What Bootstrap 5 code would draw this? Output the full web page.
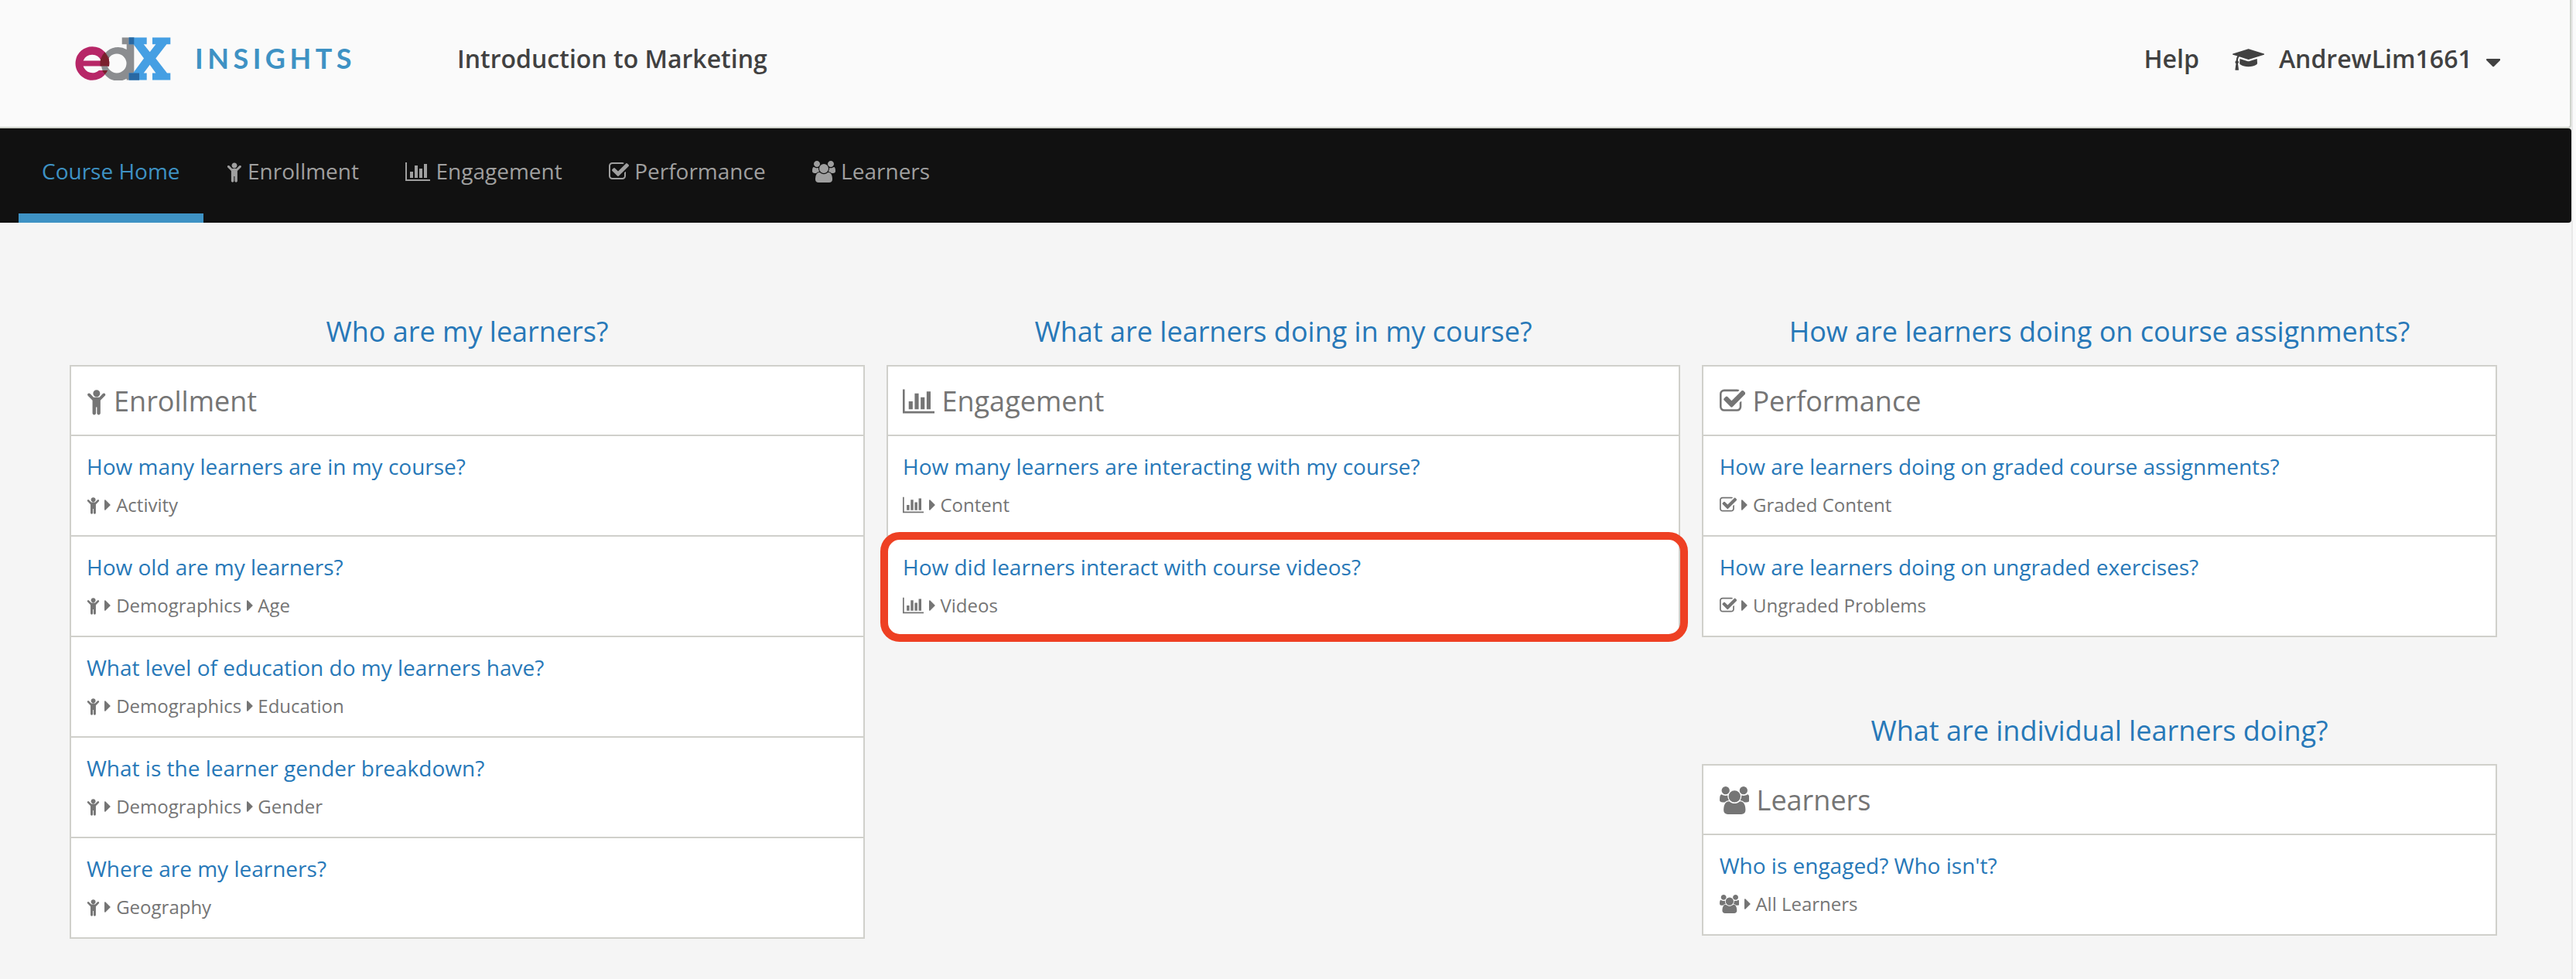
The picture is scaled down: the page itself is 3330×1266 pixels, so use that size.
<!DOCTYPE html>
<html lang="en">
<head>
<meta charset="utf-8">
<meta name="viewport" content="width=device-width, initial-scale=1">
<title>edX Insights - Introduction to Marketing</title>
<link href="https://cdn.jsdelivr.net/npm/bootstrap@5.3.0/dist/css/bootstrap.min.css" rel="stylesheet">
<style>
body{font-family:"Open Sans","Noto Sans",sans-serif;background:#f5f5f5;color:#757575;overflow:hidden}
.page-wrap{min-height:1266px}
.page-shell{width:3324px}
.page-gutter{width:6px;background:#fafafa;border-left:2px solid #e8e8e8}
.top-bar{height:166px;background:#fafafa;border-bottom:2px solid #d0d3cc;border-right:2px solid #d0d3cc;border-radius:0 0 4px 0;padding:0 90px 0 97px;color:#414141;font-size:32px;font-weight:600;line-height:44px}
.top-inner{height:152px}
.brand-word{font-family:Lato,sans-serif;font-weight:700;font-size:36px;letter-spacing:5.5px;color:#3e92c4;line-height:44px;margin-left:31px;padding-bottom:3px}
.course-title{margin-left:131px}
.user-cap{margin-left:43px}
.user-name{margin-left:19px}
.user-caret{margin-left:18px}
.ico{height:1em;vertical-align:-.143em;fill:currentColor}
.main-nav{height:122px;background:#111;border-radius:0 4px 4px 0;padding-left:24px}
.main-nav .nav-link{height:122px;padding:35px 30px 0;font-size:28px;line-height:40px;color:#9f9f9f;white-space:nowrap;border-radius:0}
.main-nav .nav-link + .nav-link{margin-left:.2px}
.main-nav .nav-link.active{color:#3e92c4;border-bottom:12px solid #3e92c4;background:none}
.board{display:grid;grid-template-columns:1028px 1026px 1028px;column-gap:28px;align-items:start;padding:116px 96px 0 90px}
.group-title{font-size:36px;line-height:50px;color:#2778b8;margin:0 0 18px;height:50px;text-align:center;font-weight:400}
.q-panel{border:2px solid #d0d0cb;border-radius:0;background:#fff}
.q-panel .list-group-item{border:0;border-top:2px solid #d0d0cb;padding:0 20px;height:130px;color:#757575;background:#fff}
.board > :nth-child(2) .list-group-item{padding-left:19px}
.board > :nth-child(3) .list-group-item{padding-left:20.7px}
.q-panel .q-head{border-top:0;height:88px;font-size:36px;line-height:90px;font-weight:400}
.q-link{display:block;font-size:28px;line-height:40px;padding-top:19px;color:#2778b8;text-decoration:none;white-space:nowrap}
.q-path{font-size:24px;line-height:34px;margin-top:13px;white-space:nowrap}
.second-group{margin-top:96px}
.callout{position:absolute;left:-10px;right:-12px;top:-6px;height:142px;border:10px solid #ee4023;border-radius:25px;z-index:3;pointer-events:none}
</style>
<script src="https://cdn.jsdelivr.net/npm/bootstrap@5.3.0/dist/js/bootstrap.bundle.min.js"></script>
</head>
<body>
<svg class="d-none" xmlns="http://www.w3.org/2000/svg">
<symbol id="child" viewBox="256 0 1280 1792"><path d="M1436 540l-292 292v824q0 46-33 79t-79 33-79-33-33-79v-384h-64v384q0 46-33 79t-79 33-79-33-33-79v-824l-292-292q-28-28-28-68t28-68q29-28 68.5-28t67.5 28l228 228h368l228-228q28-28 68-28t68 28q28 29 28 68.5t-28 67.5zm-316-156q0 93-65.500 158.500t-158.500 65.500-158.500-65.500-65.500-158.500 65.500-158.500 158.500-65.500 158.500 65.500 65.500 158.500z"/></symbol>
<symbol id="bars" viewBox="0 0 2048 1792"><path d="M640 896v512h-256v-512h256zm384-512v1024h-256v-1024h256zm1024 1152v128h-2048v-1536h128v1408h1920zm-640-896v768h-256v-768h256zm384-384v1152h-256v-1152h256z"/></symbol>
<symbol id="check" viewBox="64 0 1664 1792"><path d="M1472 930v318q0 119-84.500 203.500t-203.500 84.500h-832q-119 0-203.500-84.500t-84.500-203.500v-832q0-119 84.500-203.500t203.500-84.500h832q63 0 117 25 15 7 18 23 3 17-9 29l-49 49q-10 10-23 10-3 0-9-2-23-6-45-6h-832q-66 0-113 47t-47 113v832q0 66 47 113t113 47h832q66 0 113-47t47-113v-254q0-13 9-22l64-64q10-10 23-10 6 0 12 3 20 8 20 29zm231-489l-814 814q-24 24-57 24t-57-24l-430-430q-24-24-24-57t24-57l110-110q24-24 57-24t57 24l263 263 647-647q24-24 57-24t57 24l110 110q24 24 24 57t-24 57z"/></symbol>
<symbol id="users" viewBox="0 0 1920 1792"><path d="M593 896q-162 5-265 128h-134q-82 0-138-40.500t-56-118.500q0-353 124-353 6 0 43.500 21t97.500 42.500 119 21.500q67 0 133-23-5 37-5 66 0 139 81 256zm1071 637q0 120-73 189.500t-194 69.500h-874q-121 0-194-69.500t-73-189.500q0-53 3.500-103.500t14-109 26.500-108.500 43-97.500 62-81 85.500-53.500 111.500-20q10 0 43 21.500t73 48 107 48 135 21.500 135-21.500 107-48 73-48 43-21.500q61 0 111.500 20t85.500 53.500 62 81 43 97.500 26.500 108.500 14 109 3.500 103.500zm-1024-1277q0 106-75 181t-181 75-181-75-75-181 75-181 181-75 181 75 75 181zm704 384q0 159-112.500 271.500t-271.500 112.500-271.500-112.500-112.500-271.500 112.500-271.500 271.500-112.500 271.500 112.500 112.500 271.500zm576 225q0 78-56 118.500t-138 40.500h-134q-103-123-265-128 81-117 81-256 0-29-5-66 66 23 133 23 59 0 119-21.500t97.500-42.500 43.500-21q124 0 124 353zm-128-609q0 106-75 181t-181 75-181-75-75-181 75-181 181-75 181 75 75 181z"/></symbol>
<symbol id="grad" viewBox="0 0 2304 1792"><path d="M1774 836l18 316q4 69-82 128t-235 93.500-323 34.500-323-34.500-235-93.500-82-128l18-316 574 181q22 7 48 7t48-7zm530-324q0 23-22 31l-1120 352q-4 1-10 1t-10-1l-652-206q-43 34-71 111.500t-34 178.500q63 36 63 109 0 69-58 107l58 433q2 14-8 25-9 11-24 11h-192q-15 0-24-11-10-11-8-25l58-433q-58-38-58-107 0-73 65-111 11-207 98-330l-333-104q-22-8-22-31t22-31l1120-352q4-1 10-1t10 1l1120 352q22 8 22 31z"/></symbol>
<symbol id="right" viewBox="576 0 640 1792"><path d="M1152 896q0 26-19 45l-448 448q-19 19-45 19t-45-19-19-45v-896q0-26 19-45t45-19 45 19l448 448q19 19 19 45z"/></symbol>
<symbol id="down" viewBox="384 -200 1024 1792"><path d="M1408 704q0 26-19 45l-448 448q-19 19-45 19t-45-19l-448-448q-19-19-19-45t19-45 45-19h896q26 0 45 19t19 45z"/></symbol>
</svg>
<div class="page-wrap d-flex">
<div class="page-shell flex-shrink-0">
<header class="top-bar">
<div class="top-inner d-flex align-items-center">
<svg width="124" height="56" viewBox="0 0 124 56" aria-label="edX">
<!-- e -->
<path fill="#b72667" fill-rule="evenodd" d="M22.200 12.200a21.800 21.800 0 0 1 21.800 25.300H10.600a12.500 12.500 0 0 0 20.400 5.500H42.200A21.800 21.800 0 1 1 22.200 12.200ZM10.600 30.500H33.700a12.500 12.500 0 0 0-23.100 0Z"/>
<!-- d -->
<path fill="#8b8d90" fill-rule="evenodd" d="M60.700 .5H76.300V46.500H83V55.500H66.700V53.700A21.800 21.800 0 1 1 66.700 16V9.200H60.700ZM54 21.500a12.300 12.300 0 1 0 0 25a12.300 12.300 0 1 0 0-25Z"/>
<!-- e and d overlap -->
<path fill="#7a1f2d" d="M37.700 18.500A21.800 21.800 0 0 1 44 37.500H42.300A12.300 12.300 0 0 1 42.300 29.500L44 27Q41.500 22 37.700 18.500Z"/>
<path fill="#7a1f2d" d="M38.500 19.600A21.800 21.800 0 0 1 44 37.500H32.500A21.800 21.800 0 0 1 38.500 19.600ZM35 43H42.200A21.800 21.800 0 0 1 38.700 48.200A21.800 21.800 0 0 1 35 43Z"/>
<!-- X -->
<path fill="#459fe3" d="M69.700 .5H92.700V9.200H88.700L96.700 19.200L104.400 9.200H100V.5H123.300V9.200H118.400L104.300 27.500L119 46.500H123.300V55.500H100V46.500H104.400L96.700 35.800L88.700 46.500H92.700V55.500H69.700V46.500H75L89 27.500L75.500 9.200H69.700Z"/>
<path fill="#2868a3" d="M69.700 .5H76.300V9.200H69.700ZM69.700 46.500H83V55.500H69.700Z"/>
</svg>
<span class="brand-word">INSIGHTS</span>
<span class="course-title">Introduction to Marketing</span>
<div class="d-flex ms-auto text-nowrap">
<span>Help</span>
<span class="user-cap"><svg class="ico" viewBox="0 0 2304 1792"><use href="#grad"/></svg></span>
<span class="user-name">AndrewLim1661</span>
<span class="user-caret"><svg class="ico" viewBox="0 0 1024 1792"><use href="#down"/></svg></span>
</div>
</div>
</header>
<nav class="main-nav nav flex-nowrap">
<a class="nav-link active" href="#">Course Home</a>
<a class="nav-link" href="#"><svg class="ico" viewBox="0 0 1280 1792"><use href="#child"/></svg> Enrollment</a>
<a class="nav-link" href="#"><svg class="ico" viewBox="0 0 2048 1792"><use href="#bars"/></svg> Engagement</a>
<a class="nav-link" href="#"><svg class="ico" viewBox="0 0 1664 1792"><use href="#check"/></svg> Performance</a>
<a class="nav-link" href="#"><svg class="ico" viewBox="0 0 1920 1792"><use href="#users"/></svg> Learners</a>
</nav>
<main class="board">
<section>
<h2 class="group-title">Who are my learners?</h2>
<div class="list-group q-panel">
<h3 class="list-group-item q-head m-0"><svg class="ico" viewBox="0 0 1280 1792"><use href="#child"/></svg> Enrollment</h3>
<div class="list-group-item"><a class="q-link" href="#">How many learners are in my course?</a><div class="q-path"><svg class="ico" viewBox="0 0 1280 1792"><use href="#child"/></svg> <svg class="ico" viewBox="0 0 640 1792"><use href="#right"/></svg> Activity</div></div>
<div class="list-group-item"><a class="q-link" href="#">How old are my learners?</a><div class="q-path"><svg class="ico" viewBox="0 0 1280 1792"><use href="#child"/></svg> <svg class="ico" viewBox="0 0 640 1792"><use href="#right"/></svg> Demographics <svg class="ico" viewBox="0 0 640 1792"><use href="#right"/></svg> Age</div></div>
<div class="list-group-item"><a class="q-link" href="#">What level of education do my learners have?</a><div class="q-path"><svg class="ico" viewBox="0 0 1280 1792"><use href="#child"/></svg> <svg class="ico" viewBox="0 0 640 1792"><use href="#right"/></svg> Demographics <svg class="ico" viewBox="0 0 640 1792"><use href="#right"/></svg> Education</div></div>
<div class="list-group-item"><a class="q-link" href="#">What is the learner gender breakdown?</a><div class="q-path"><svg class="ico" viewBox="0 0 1280 1792"><use href="#child"/></svg> <svg class="ico" viewBox="0 0 640 1792"><use href="#right"/></svg> Demographics <svg class="ico" viewBox="0 0 640 1792"><use href="#right"/></svg> Gender</div></div>
<div class="list-group-item"><a class="q-link" href="#">Where are my learners?</a><div class="q-path"><svg class="ico" viewBox="0 0 1280 1792"><use href="#child"/></svg> <svg class="ico" viewBox="0 0 640 1792"><use href="#right"/></svg> Geography</div></div>
</div>
</section>
<section>
<h2 class="group-title">What are learners doing in my course?</h2>
<div class="list-group q-panel">
<h3 class="list-group-item q-head m-0"><svg class="ico" viewBox="0 0 2048 1792"><use href="#bars"/></svg> Engagement</h3>
<div class="list-group-item"><a class="q-link" href="#">How many learners are interacting with my course?</a><div class="q-path"><svg class="ico" viewBox="0 0 2048 1792"><use href="#bars"/></svg> <svg class="ico" viewBox="0 0 640 1792"><use href="#right"/></svg> Content</div></div>
<div class="list-group-item position-relative"><a class="q-link" href="#">How did learners interact with course videos?</a><div class="q-path"><svg class="ico" viewBox="0 0 2048 1792"><use href="#bars"/></svg> <svg class="ico" viewBox="0 0 640 1792"><use href="#right"/></svg> Videos</div><div class="callout"></div></div>
</div>
</section>
<section>
<h2 class="group-title">How are learners doing on course assignments?</h2>
<div class="list-group q-panel">
<h3 class="list-group-item q-head m-0"><svg class="ico" viewBox="0 0 1664 1792"><use href="#check"/></svg> Performance</h3>
<div class="list-group-item"><a class="q-link" href="#">How are learners doing on graded course assignments?</a><div class="q-path"><svg class="ico" viewBox="0 0 1664 1792"><use href="#check"/></svg> <svg class="ico" viewBox="0 0 640 1792"><use href="#right"/></svg> Graded Content</div></div>
<div class="list-group-item"><a class="q-link" href="#">How are learners doing on ungraded exercises?</a><div class="q-path"><svg class="ico" viewBox="0 0 1664 1792"><use href="#check"/></svg> <svg class="ico" viewBox="0 0 640 1792"><use href="#right"/></svg> Ungraded Problems</div></div>
</div>
<h2 class="group-title second-group">What are individual learners doing?</h2>
<div class="list-group q-panel">
<h3 class="list-group-item q-head m-0"><svg class="ico" viewBox="0 0 1920 1792"><use href="#users"/></svg> Learners</h3>
<div class="list-group-item"><a class="q-link" href="#">Who is engaged? Who isn't?</a><div class="q-path"><svg class="ico" viewBox="0 0 1920 1792"><use href="#users"/></svg> <svg class="ico" viewBox="0 0 640 1792"><use href="#right"/></svg> All Learners</div></div>
</div>
</section>
</main>
</div>
<div class="page-gutter flex-fill"></div>
</div>
</body>
</html>
